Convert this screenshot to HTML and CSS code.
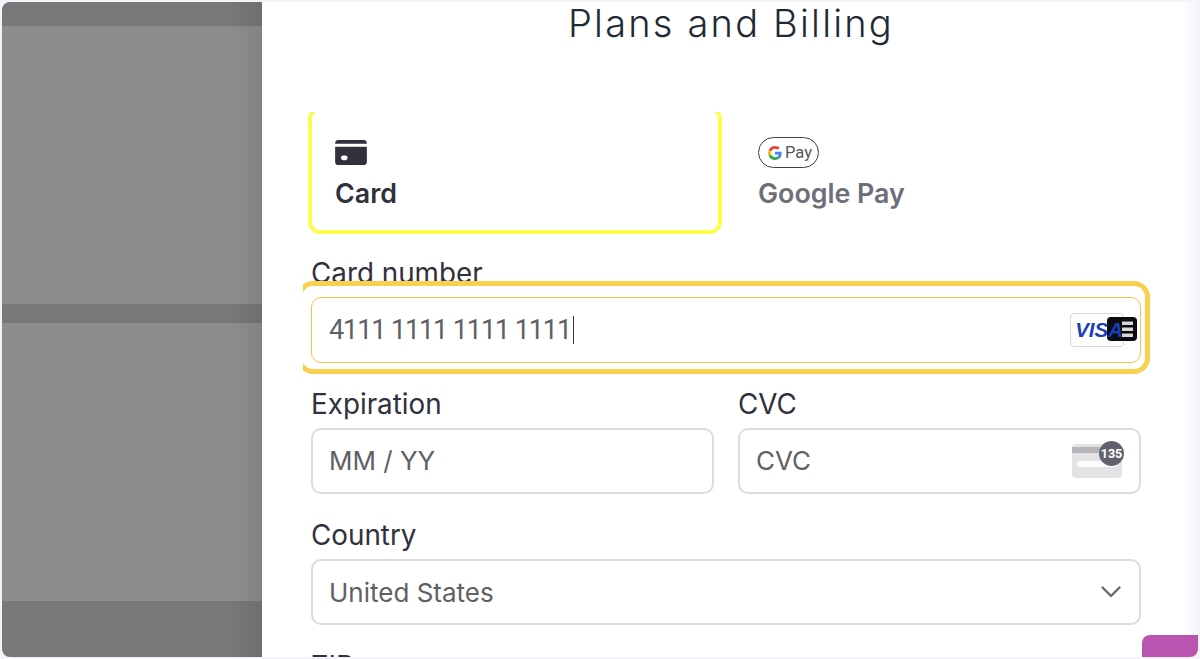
FILE: index.html
```html
<!DOCTYPE html>
<html lang="en">
<head>
<meta charset="utf-8">
<title>Plans and Billing</title>
<link rel="stylesheet" href="styles.css">
</head>
<body>
<div class="frame">
  <aside class="side">
    <div class="band dark band-top"></div>
    <div class="band light"></div>
    <div class="band dark band-mid"></div>
    <div class="band light"></div>
    <div class="band dark band-bottom"></div>
  </aside>
  <main class="main">
    <h1 class="title">Plans and Billing</h1>
    <div class="tabs">
      <div class="tab tab-active">
        <svg class="card-icon" viewBox="0 0 33 26" width="32" height="25"><path fill="#30313d" d="M3.5 0h26A3.5 3.5 0 0 1 33 3.5V4H0v-.5A3.5 3.5 0 0 1 3.5 0zM0 7h33v15.5a3.5 3.5 0 0 1-3.5 3.5h-26A3.5 3.5 0 0 1 0 22.500z"/><rect x="6" y="16" width="7" height="5" rx="2.500" fill="#fff"/></svg>
        <span class="tab-label">Card</span>
      </div>
      <div class="tab tab-other">
        <div class="gpay">
          <svg viewBox="0 0 48 48" width="14" height="14"><path fill="#ea4335" d="M24 9.500c3.500 0 6.700 1.200 9.200 3.600l6.900-6.900C35.900 2.400 30.400 0 24 0 14.600 0 6.500 5.400 2.600 13.200l8 6.200C12.400 13.700 17.700 9.500 24 9.500z"/><path fill="#4285f4" d="M46.900 24.500c0-1.600-.1-3.100-.4-4.500H24v9h12.900c-.6 3-2.200 5.500-4.800 7.200l7.700 6c4.500-4.200 7.100-10.300 7.100-17.700z"/><path fill="#fbbc05" d="M10.500 28.600c-.5-1.400-.8-3-.8-4.600s.3-3.200.8-4.600l-8-6.200C.9 16.500 0 20.100 0 24s.9 7.500 2.600 10.800z"/><path fill="#34a853" d="M24 48c6.500 0 11.900-2.100 15.900-5.800l-7.700-6c-2.200 1.400-4.900 2.300-8.200 2.300-6.300 0-11.600-4.200-13.500-9.900l-8 6.200C6.500 42.600 14.600 48 24 48z"/></svg>
          <span class="gpay-text">Pay</span>
        </div>
        <span class="tab-label">Google Pay</span>
      </div>
    </div>

    <label class="label">Card number</label>
    <div class="field-highlight">
      <div class="input input-focus">
        <span class="value value-number">4111 1111 1111 1111</span><span class="caret"></span>
        <span class="visa-box"></span>
        <svg class="contact" viewBox="0 0 30 24" width="30" height="24"><rect width="30" height="24" rx="4" fill="#0b0b10"/><rect x="15" y="4.500" width="11" height="3.500" fill="#d8d8d8"/><rect x="15" y="10.500" width="11" height="3.500" fill="#d8d8d8"/><rect x="15" y="16.500" width="11" height="3.500" fill="#d8d8d8"/></svg>
        <span class="visa">VISA</span>
      </div>
    </div>

    <div class="row">
      <div class="col">
        <label class="label">Expiration</label>
        <div class="input"><span class="value">MM / YY</span></div>
      </div>
      <div class="col">
        <label class="label">CVC</label>
        <div class="input">
          <span class="value">CVC</span>
          <div class="cvc-card"><span class="cvc-strip"></span><span class="cvc-line"></span><span class="cvc-badge">135</span></div>
        </div>
      </div>
    </div>

    <label class="label">Country</label>
    <div class="input input-select">
      <span class="value">United States</span>
      <svg class="chevron" viewBox="0 0 20 12" width="20" height="12"><path d="M1.500 1.500 10 10l8.500-8.500" fill="none" stroke="#6a6a72" stroke-width="2.400" stroke-linecap="round" stroke-linejoin="round"/></svg>
    </div>

    <label class="label">ZIP</label>
  </main>
  <div class="help"></div>
</div>
</body>
</html>
```

FILE: styles.css
```css
* { box-sizing: border-box; }
html, body { margin: 0; height: 100%; overflow: hidden; }
body {
  padding: 2px;
  background: #f3f3f9;
  font-family: Inter, "Liberation Sans", sans-serif;
}
.frame {
  position: relative;
  display: flex;
  height: 655px;
  border-radius: 8px 0 0 8px;
  overflow: hidden;
  background: #fff;
}
.side {
  display: flex;
  flex-direction: column;
  flex: 0 0 260px;
  background: linear-gradient(90deg, #8d8d8d 0, #8d8d8d 88%, #828282 100%);
}
.band.light { flex: 0 0 278px; }
.band.dark { background: rgba(0, 0, 0, .15); }
.band-top { flex: 0 0 24px; }
.band-mid { flex: 0 0 19px; }
.band-bottom { flex: 1; }
.main {
  flex: 1;
  min-width: 0;
  padding: 0 57px 0 49px;
  background: linear-gradient(90deg, #fff 0, #fff 98.500%, #f5f5fa 100%);
}
.title {
  margin: 0 0 66px;
  padding-left: 10px;
  height: 44px;
  font-family: Inter, sans-serif;
  font-size: 38px;
  line-height: 42px;
  font-weight: 300;
  letter-spacing: 2.200px;
  color: #1f2a33;
  text-align: center;
}
.tabs {
  display: flex;
  gap: 36px;
  height: 122px;
  margin: 0 0 23px -3px;
  overflow: hidden;
}
.tab {
  flex: 0 0 414px;
  display: flex;
  flex-direction: column;
  height: 122px;
}
.tab-active {
  height: 127px;
  margin-top: -5px;
  padding: 29px 23px 0;
  border: 4px solid #fcfc4c;
  border-radius: 12px;
}
.tab-other { padding-top: 25px; }
.card-icon { display: block; margin-bottom: 12px; }
.tab-label {
  font-family: Inter, sans-serif;
  font-size: 26.800px;
  line-height: 32px;
  font-weight: 600;
  color: #30313d;
}
.tab-other .tab-label { color: #6d6e78; }
.gpay {
  display: flex;
  align-items: center;
  justify-content: center;
  gap: 3px;
  width: 61px;
  height: 31px;
  margin-bottom: 9px;
  padding-left: 3px;
  border: 1.500px solid #3c4043;
  border-radius: 16px;
}
.gpay-text { font-size: 16.500px; font-family: Roboto, sans-serif; color: #55555a; }
.label {
  display: block;
  height: 32px;
  margin-bottom: 8px;
  font-size: 27.800px;
  line-height: 32px;
  color: #30313d;
}
.field-highlight { position: relative; margin-bottom: 25px; }
.field-highlight::before {
  content: "";
  position: absolute;
  inset: -16px -9px -11px -14px;
  background: #fff;
  border: 5px solid #f9cf50;
  border-radius: 16px;
  clip-path: inset(0 0 0 6px);
}
.input {
  position: relative;
  display: flex;
  align-items: center;
  height: 66px;
  padding: 0 16px 2px;
  background: #fff;
  border: 2px solid #dcdce0;
  border-radius: 10px;
}
.input-focus { border: 1.500px solid #f7c244; padding: 0 17px; }
.value { font-size: 26px; color: #5f6066; white-space: nowrap; }
.value-number {
  font-family: Roboto, sans-serif;
  font-size: 27px;
  letter-spacing: -1.100px;
}
.caret { width: 1.500px; height: 28px; margin-left: 2px; background: #30313d; }
.visa-box {
  position: absolute;
  right: 16px;
  top: 15px;
  width: 54px;
  height: 34px;
  border: 1px solid #d8d8dc;
  border-radius: 4px;
  background: #fff;
}
.visa {
  position: absolute;
  right: 17px;
  top: 15px;
  font-family: "Liberation Sans", sans-serif;
  font-size: 20.500px;
  line-height: 34px;
  font-weight: 700;
  font-style: italic;
  color: #1a3fb8;
}
.contact { position: absolute; right: 3px; top: 19px; }
.row { display: flex; gap: 24px; margin-bottom: 25px; }
.col { flex: 1; min-width: 0; }
.cvc-card {
  position: absolute;
  right: 17px;
  top: 14px;
  width: 50px;
  height: 34px;
  border-radius: 4px;
  background: #e3e3e5;
}
.cvc-strip { position: absolute; left: 0; right: 0; top: 3px; height: 6px; background: #b5b5b9; }
.cvc-line { position: absolute; left: 5px; right: 5px; top: 17px; height: 6px; background: #fbfbfb; }
.cvc-badge {
  position: absolute;
  right: -2px;
  top: -3px;
  width: 25px;
  height: 25px;
  border-radius: 50%;
  background: #62626c;
  color: #fff;
  font-family: Roboto, sans-serif;
  font-size: 12.500px;
  font-weight: 700;
  line-height: 25px;
  text-align: center;
}
.input-select { margin-bottom: 25px; padding-bottom: 0; justify-content: space-between; }
.chevron { margin-right: 2px; }
.help {
  position: absolute;
  right: 0;
  bottom: 0;
  width: 56px;
  height: 22px;
  background: #b955b0;
  border-radius: 8px 0 8px 0;
}
```
